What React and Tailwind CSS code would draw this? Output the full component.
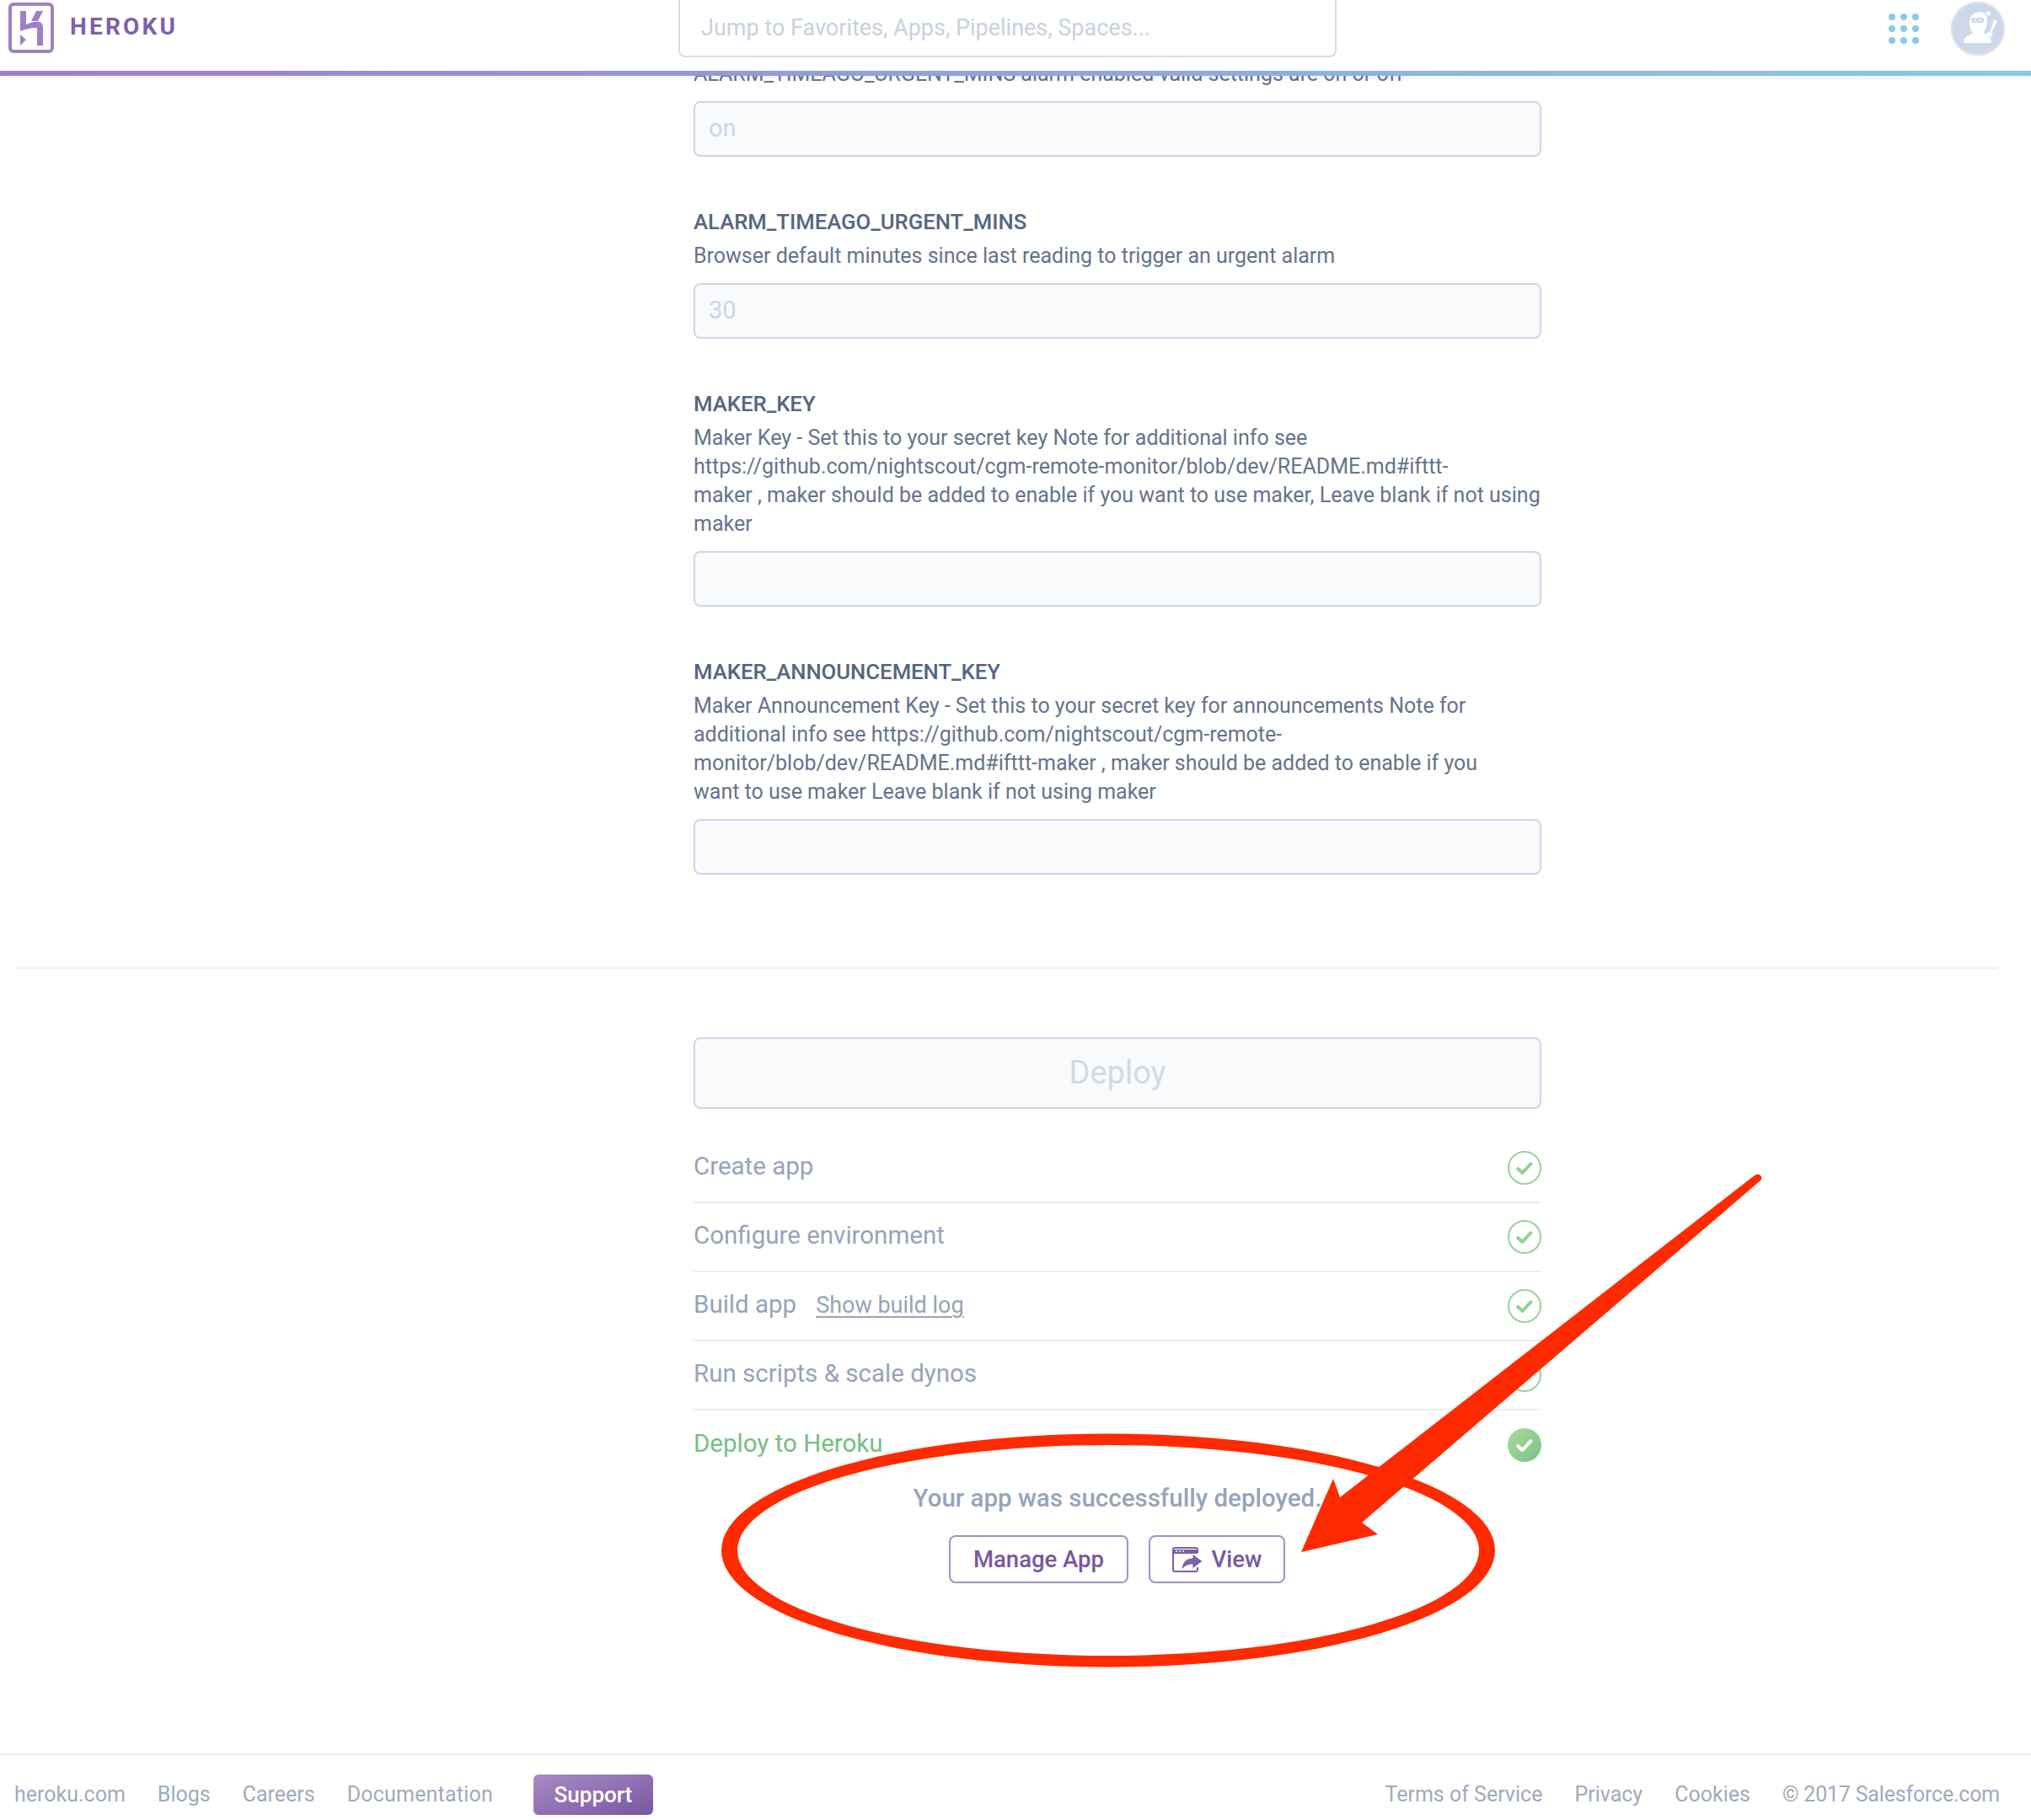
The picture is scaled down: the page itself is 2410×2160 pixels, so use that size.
import React from 'react'

const font = 'font-["Roboto",sans-serif]'

function Logo() {
  return (
    <svg width="56" height="62" viewBox="0 0 56 62" className="shrink-0">
      <rect x="2" y="2" width="50" height="56" rx="4" fill="none" stroke="#a07fc4" strokeWidth="4" />
      <path d="M14 10h7v16c6-3 12-4 16-3 3 1 4 4 4 7v21h-7V32c0-2-1-2-3-2-4 0-8 1-17 4z" fill="#a07fc4" />
      <path d="M33 10h8l-6 12h-8zM14 38l7 6-7 7z" fill="#a07fc4" />
    </svg>
  )
}

function AppsGrid() {
  const dots = [0, 1, 2, 3, 4, 5, 6, 7, 8]
  return (
    <div className="grid grid-cols-3 gap-[6px] w-[36px]">
      {dots.map((d) => (
        <span key={d} className="w-[8px] h-[8px] rounded-full bg-[#8ec8e8]" />
      ))}
    </div>
  )
}

function Avatar() {
  return (
    <svg width="66" height="66" viewBox="0 0 66 66" className="shrink-0">
      <circle cx="33" cy="33" r="31.5" fill="#cfd8e8" stroke="#e4e8f0" strokeWidth="2" />
      <path d="M23 26C23 16 30 13 36 13C41 13 44 17 44 24C44 30 42 35 39 37L47 43Q49 45 49 50H16Q16 44 20 42L27 38C24 35 23 31 23 26Z" fill="#fff" />
      <path d="M42 14L48 12L47 15L49 17L44 17Z" fill="#fff" />
      <rect x="25" y="20" width="15" height="6" rx="2" fill="#cfd8e8" />
      <path d="M28 23h3M34 23h3" stroke="#fff" strokeWidth="1.6" />
      <path d="M52 22L56 24L49 38L51 39L49 43L43 40L45 37L47 38Z" fill="#fff" />
    </svg>
  )
}

function Header() {
  return (
    <header className="relative z-10 bg-white shadow-[0_3px_6px_rgba(60,70,100,0.07)]">
      <div className="h-[84px] flex items-start">
        <div className="ml-[10px] mt-[3px]">
          <Logo />
        </div>
        <div className="ml-[17px] mt-[17px] w-[135px] text-[28px] leading-[30px] font-bold tracking-[3.2px] text-[#7f5fa8]">HEROKU</div>
        <div className="ml-[587px] w-[781px] h-[68px] border-2 border-t-0 border-[#d5dcea] rounded-b-[8px] flex items-center pl-[25px] text-[27px] text-[#c8d1e0]">
          Jump to Favorites, Apps, Pipelines, Spaces...
        </div>
        <div className="ml-auto mr-[30px] mt-[1px] flex items-center gap-[37px] h-[66px]">
          <AppsGrid />
          <Avatar />
        </div>
      </div>
      <div className="h-[6px] bg-gradient-to-r from-[#a27ec6] via-[#8fa6d8] to-[#8bc8e8]" />
    </header>
  )
}

function Field({ label, children, value = '' }) {
  return (
    <div>
      <div className="text-[25.7px] leading-[34px] font-medium text-[#56657f]">{label}</div>
      <div className="mt-[7px] text-[25px] leading-[34px] text-[#65738b]">{children}</div>
      <FieldInput value={value} />
    </div>
  )
}

function FieldInput({ value }) {
  return (
    <div className="mt-[15px] h-[66px] border-2 border-[#ced6e7] rounded-[8px] bg-[#f9fafc] flex items-center pl-[16px] text-[29px] text-[#cdd6e5]">
      {value}
    </div>
  )
}

function CheckIcon({ filled }) {
  if (filled) {
    return (
      <svg width="40" height="40" viewBox="0 0 40 40" className="shrink-0">
        <defs>
          <linearGradient id="okFill" x1="0" y1="0" x2="1" y2="1">
            <stop offset="0" stopColor="#a8dc98" />
            <stop offset="1" stopColor="#7cc08a" />
          </linearGradient>
        </defs>
        <circle cx="20" cy="20" r="20" fill="url(#okFill)" />
        <path d="M11 20l6.500 6 11-12" fill="none" stroke="#fff" strokeWidth="4" strokeLinejoin="round" />
      </svg>
    )
  }
  return (
    <svg width="40" height="40" viewBox="0 0 40 40" className="shrink-0">
      <circle cx="20" cy="20" r="19" fill="#fff" stroke="#98d19e" strokeWidth="2" />
      <path d="M11 20l6.500 6 11-12" fill="none" stroke="#8fd296" strokeWidth="4" strokeLinejoin="round" />
    </svg>
  )
}

function Step({ children, filled, last }) {
  return (
    <div className={`h-[82px] flex items-center justify-between ${last ? '' : 'border-b-2 border-[#eceef5]'}`}>
      <div className={`pb-[3px] text-[29.5px] ${filled ? 'text-[#74bf82]' : 'text-[#97a3b8]'}`}>{children}</div>
      <CheckIcon filled={filled} />
    </div>
  )
}

function ViewIcon() {
  return (
    <svg width="36" height="30" viewBox="0 0 36 30" className="shrink-0">
      <path d="M30 24v3a2 2 0 0 1-2 2H3a2 2 0 0 1-2-2V3a2 2 0 0 1 2-2h25a2 2 0 0 1 2 2v4" fill="none" stroke="#7f5fa8" strokeWidth="2" />
      <path d="M1 3h29v5H1z" fill="#7f5fa8" />
      <path d="M4 5h2M8 5h2M12 5h2" stroke="#fff" strokeWidth="1.6" />
      <path d="M24 8l12 9-12 9v-5c-6 0-10 2-13 7 0-9 5-15 13-15z" fill="#7f5fa8" stroke="#fff" strokeWidth="1" />
    </svg>
  )
}

function Annotation() {
  return (
    <svg width="2410" height="2160" viewBox="0 0 2410 2160" className="absolute left-0 top-0 z-20 pointer-events-none">
      <path
        fillRule="evenodd"
        d="M856 1840a459 138.500 0 1 0 918 0a459 138.500 0 1 0 -918 0zM875 1840a440 125 0 1 1 880 0a440 125 0 1 1 -880 0z"
        fill="#ff2a00"
      />
      <path
        d="M2082 1395q4-3 7 0t0 6L1616 1807l19 14-91 21 38-87 8 22z"
        fill="#ff2a00"
      />
    </svg>
  )
}

export default function App() {
  return (
    <div className={`relative w-[2410px] h-[2160px] overflow-hidden bg-white flex flex-col ${font}`}>
      <Header />

      <main className="flex-1 -mt-[19px]">
        <div className="ml-[823px] w-[1006px]">
          <div className="text-[25px] leading-[34px] text-[#65738b]">ALARM_TIMEAGO_URGENT_MINS alarm enabled valid settings are on or off</div>
          <FieldInput value="on" />

          <div className="mt-[60px]">
            <Field label="ALARM_TIMEAGO_URGENT_MINS" value="30">
              Browser default minutes since last reading to trigger an urgent alarm
            </Field>
          </div>

          <div className="mt-[60px]">
            <Field label="MAKER_KEY">
              Maker Key - Set this to your secret key Note for additional info see
              <br />
              https://github.com/nightscout/cgm-remote-monitor/blob/dev/README.md#ifttt-
              <br />
              maker , maker should be added to enable if you want to use maker, Leave blank if not using
              <br />
              maker
            </Field>
          </div>

          <div className="mt-[60px]">
            <Field label="MAKER_ANNOUNCEMENT_KEY">
              Maker Announcement Key - Set this to your secret key for announcements Note for
              <br />
              additional info see https://github.com/nightscout/cgm-remote-
              <br />
              monitor/blob/dev/README.md#ifttt-maker , maker should be added to enable if you
              <br />
              want to use maker Leave blank if not using maker
            </Field>
          </div>
        </div>

        <div className="mt-[110px] mx-[20px] w-[2350px] h-[2px] bg-[#eef0f5]" />

        <div className="ml-[823px] w-[1006px] mt-[81px]">
          <div className="h-[85px] border-2 border-[#ced6e7] rounded-[8px] bg-[#f9fafc] flex items-center justify-center text-[38px] text-[#d2d9e7]">
            Deploy
          </div>

          <div className="mt-[30px]">
            <Step>Create app</Step>
            <Step>Configure environment</Step>
            <Step>
              Build app
              <span className="ml-[23px] text-[27px] underline underline-offset-4">Show build log</span>
            </Step>
            <Step>Run scripts &amp; scale dynos</Step>
            <Step filled last>Deploy to Heroku</Step>
          </div>

          <div className="mt-[5px] text-center text-[29.5px] leading-[34px] font-medium text-[#97a3b8]">
            Your app was successfully deployed.
          </div>

          <div className="mt-[27px] ml-[303px] flex gap-[24px]">
            <div className="w-[213px] h-[57px] border-2 border-[#a58fc4] rounded-[8px] flex items-center justify-center text-[27.500px] font-medium text-[#79589f]">
              Manage App
            </div>
            <div className="w-[162px] h-[57px] border-2 border-[#a58fc4] rounded-[8px] flex items-center justify-center gap-[11px] text-[27.500px] font-medium text-[#79589f]">
              <ViewIcon />
              View
            </div>
          </div>
        </div>
      </main>

      <footer className="h-[79px] border-t-2 border-[#eceff5] flex items-start pt-[23px] pl-[17px] pr-[37px] text-[25px] text-[#a0aabc]">
        <a className="leading-[48px]">heroku.com</a>
        <a className="ml-[38px] leading-[48px]">Blogs</a>
        <a className="ml-[38px] leading-[48px]">Careers</a>
        <a className="ml-[38px] leading-[48px] tracking-[0.2px]">Documentation</a>
        <div className="ml-[48px] w-[142px] h-[48px] rounded-[6px] bg-gradient-to-br from-[#a98bc7] to-[#79589f] flex items-center justify-center text-[26px] font-medium text-white">
          Support
        </div>
        <div className="ml-auto flex gap-[38px] leading-[48px]">
          <a>Terms of Service</a>
          <a>Privacy</a>
          <a>Cookies</a>
          <span className="tracking-[-0.2px]">© 2017 Salesforce.com</span>
        </div>
      </footer>

      <Annotation />
    </div>
  )
}
